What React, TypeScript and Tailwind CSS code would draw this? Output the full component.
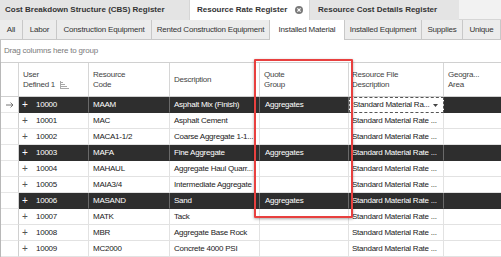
import React from "react";

const font = { fontFamily: '"Liberation Sans", Arial, sans-serif' };

type Row = { ud: string; code: string; desc: string; qg?: string; dark?: boolean; current?: boolean };

const rows: Row[] = [
  { ud: "10000", code: "MAAM", desc: "Asphalt Mix (Finish)", qg: "Aggregates", dark: true, current: true },
  { ud: "10001", code: "MAC", desc: "Asphalt Cement" },
  { ud: "10002", code: "MACA1-1/2", desc: "Coarse Aggregate 1-1..." },
  { ud: "10003", code: "MAFA", desc: "Fine Aggregate", qg: "Aggregates", dark: true },
  { ud: "10004", code: "MAHAUL", desc: "Aggregate Haul Quarr..." },
  { ud: "10005", code: "MAIA3/4", desc: "Intermediate Aggregate" },
  { ud: "10006", code: "MASAND", desc: "Sand", qg: "Aggregates", dark: true },
  { ud: "10007", code: "MATK", desc: "Tack" },
  { ud: "10008", code: "MBR", desc: "Aggregate Base Rock" },
  { ud: "10009", code: "MC2000", desc: "Concrete 4000 PSI" },
];

const subTabs: { label: string; w: string; active?: boolean }[] = [
  { label: "All", w: "w-[23px]" },
  { label: "Labor", w: "w-[34px]" },
  { label: "Construction Equipment", w: "w-[95px]" },
  { label: "Rented Construction Equipment", w: "w-[118px]" },
  { label: "Installed Material", w: "w-[75px]", active: true },
  { label: "Installed Equipment", w: "w-[77px]" },
  { label: "Supplies", w: "w-[41px]" },
  { label: "Unique", w: "flex-1" },
];

function SortIcon() {
  return (
    <svg width="9" height="8" viewBox="0 0 9 8" className="ml-[5px]">
      <g stroke="#a8a8a8" strokeWidth="1">
        <line x1="0.5" y1="0" x2="0.5" y2="8" />
        <line x1="0" y1="1.5" x2="3" y2="1.5" />
        <line x1="0" y1="3.5" x2="5" y2="3.5" />
        <line x1="0" y1="5.5" x2="7" y2="5.5" />
        <line x1="0" y1="7.5" x2="9" y2="7.5" />
      </g>
    </svg>
  );
}

function CloseIcon() {
  return (
    <svg width="8" height="8" viewBox="0 0 8 8">
      <circle cx="4" cy="4" r="4" fill="#7a7a7a" />
      <path d="M2.4 2.4 L5.6 5.6 M5.6 2.4 L2.4 5.6" stroke="#fff" strokeWidth="1.2" />
    </svg>
  );
}

export default function App() {
  const cols = "grid grid-cols-[18px_70px_81px_90px_89px_95px_1fr]";
  return (
    <div className="relative w-[501px] h-[257px] overflow-hidden bg-white text-[#222]" style={font}>
      {/* top tabs */}
      <div className="flex h-[20px] bg-[#f2f2f2] text-[8px] font-bold text-[#333]">
        <div className="w-[190px] bg-[#e4e4e4] flex items-center pl-[5px] border-r border-[#d6d6d6]">
          Cost Breakdown Structure (CBS) Register
        </div>
        <div className="w-[119px] bg-white flex items-center pl-[7px] gap-[8px]">
          <span>Resource Rate Register</span>
          <CloseIcon />
        </div>
        <div className="w-[150px] bg-[#e4e4e4] flex items-center pl-[8px] border-l border-[#d6d6d6]">
          Resource Cost Details Register
        </div>
        <div className="flex-1 border-b border-[#d6d6d6]" />
      </div>
      {/* sub tabs */}
      <div className="flex h-[20px] text-[8px] tracking-[-0.2px] text-[#333]">
        {subTabs.map((t) => (
          <div
            key={t.label}
            className={`${t.w} flex items-center justify-center border-r border-[#c8c8c8] whitespace-nowrap ${
              t.active ? "bg-white" : "bg-[#ececec] border-b"
            }`}
          >
            {t.label}
          </div>
        ))}
      </div>
      {/* group panel */}
      <div className="h-[22px] flex items-center pl-[3px] text-[8px] tracking-[-0.2px] text-[#7a7a7a] border-l border-[#c0c0c0]">
        Drag columns here to group
      </div>
      {/* grid */}
      <div className="border-l border-[#b8b8b8] text-[8px] tracking-[-0.25px]">
        <div className={`${cols} h-[35px] border-t border-b border-[#d0d0d0] text-[#444] leading-[10px]`}>
          <div className="border-r border-[#d6d6d6]" />
          <div className="border-r border-[#d6d6d6] flex items-center pl-[4px]">
            <div>
              <div>User</div>
              <div className="flex items-center">
                Defined 1<SortIcon />
              </div>
            </div>
          </div>
          <div className="border-r border-[#d6d6d6] flex items-center pl-[4px]">
            <div>
              <div>Resource</div>
              <div>Code</div>
            </div>
          </div>
          <div className="border-r border-[#d6d6d6] flex items-center pl-[4px]">Description</div>
          <div className="border-r border-[#d6d6d6] flex items-center pl-[4px]">
            <div>
              <div>Quote</div>
              <div>Group</div>
            </div>
          </div>
          <div className="border-r border-[#d6d6d6] flex items-center pl-[3px]">
            <div>
              <div>Resource File</div>
              <div>Description</div>
            </div>
          </div>
          <div className="flex items-center pl-[4px]">
            <div>
              <div>Geogra...</div>
              <div>Area</div>
            </div>
          </div>
        </div>
        {rows.map((r) => {
          const cell = r.dark
            ? "bg-[#2e2e2e] text-white border-r border-[#6a6a6a] border-b border-b-[#2e2e2e]"
            : "border-r border-[#dadada] border-b";
          const b = r.dark ? "" : "border-[#e2e2e2]";
          return (
            <div key={r.ud} className={`${cols} h-[16px]`}>
              <div className="border-r border-[#d0d0d0] border-b border-b-[#e6e6e6] flex items-center justify-center">
                {r.current && (
                  <svg width="8" height="6" viewBox="0 0 8 6">
                    <path d="M0 3 H7 M4.5 0.6 L7 3 L4.5 5.4" stroke="#666" strokeWidth="0.9" fill="none" />
                  </svg>
                )}
              </div>
              <div className={`${cell} ${b} flex items-center whitespace-nowrap overflow-hidden`}>
                <span className={`w-[14px] pl-[3px] text-[10px] leading-none ${r.dark ? "text-white" : "text-[#555]"}`}>+</span>
                <span className="pl-[3px]">{r.ud}</span>
              </div>
              <div className={`${cell} ${b} flex items-center pl-[4px] whitespace-nowrap overflow-hidden`}>{r.code}</div>
              <div className={`${cell} ${b} flex items-center pl-[4px] whitespace-nowrap overflow-hidden`}>{r.desc}</div>
              <div className={`${cell} ${b} flex items-center pl-[5px] whitespace-nowrap overflow-hidden`}>{r.qg ?? ""}</div>
              {r.current ? (
                <div className="bg-white text-[#222] border border-dashed border-[#555] flex items-center justify-between pl-[3px] pr-[5px] whitespace-nowrap overflow-hidden">
                  <span>Standard Material Ra...</span>
                  <svg width="5" height="3" viewBox="0 0 5 3">
                    <path d="M0 0 H5 L2.5 3 Z" fill="#444" />
                  </svg>
                </div>
              ) : (
                <div className={`${cell} ${b} flex items-center pl-[3px] whitespace-nowrap overflow-hidden`}>
                  Standard Material Rate ...
                </div>
              )}
              <div className={`${r.dark ? "bg-[#2e2e2e]" : "border-b border-[#e2e2e2]"}`} />
            </div>
          );
        })}
      </div>
      {/* red highlight */}
      <div className="absolute left-[254px] top-[59px] w-[99px] h-[159px] border-2 border-[#e8403f] rounded-[1px] shadow-[0_1px_3px_rgba(0,0,0,0.35)] pointer-events-none" />
    </div>
  );
}
